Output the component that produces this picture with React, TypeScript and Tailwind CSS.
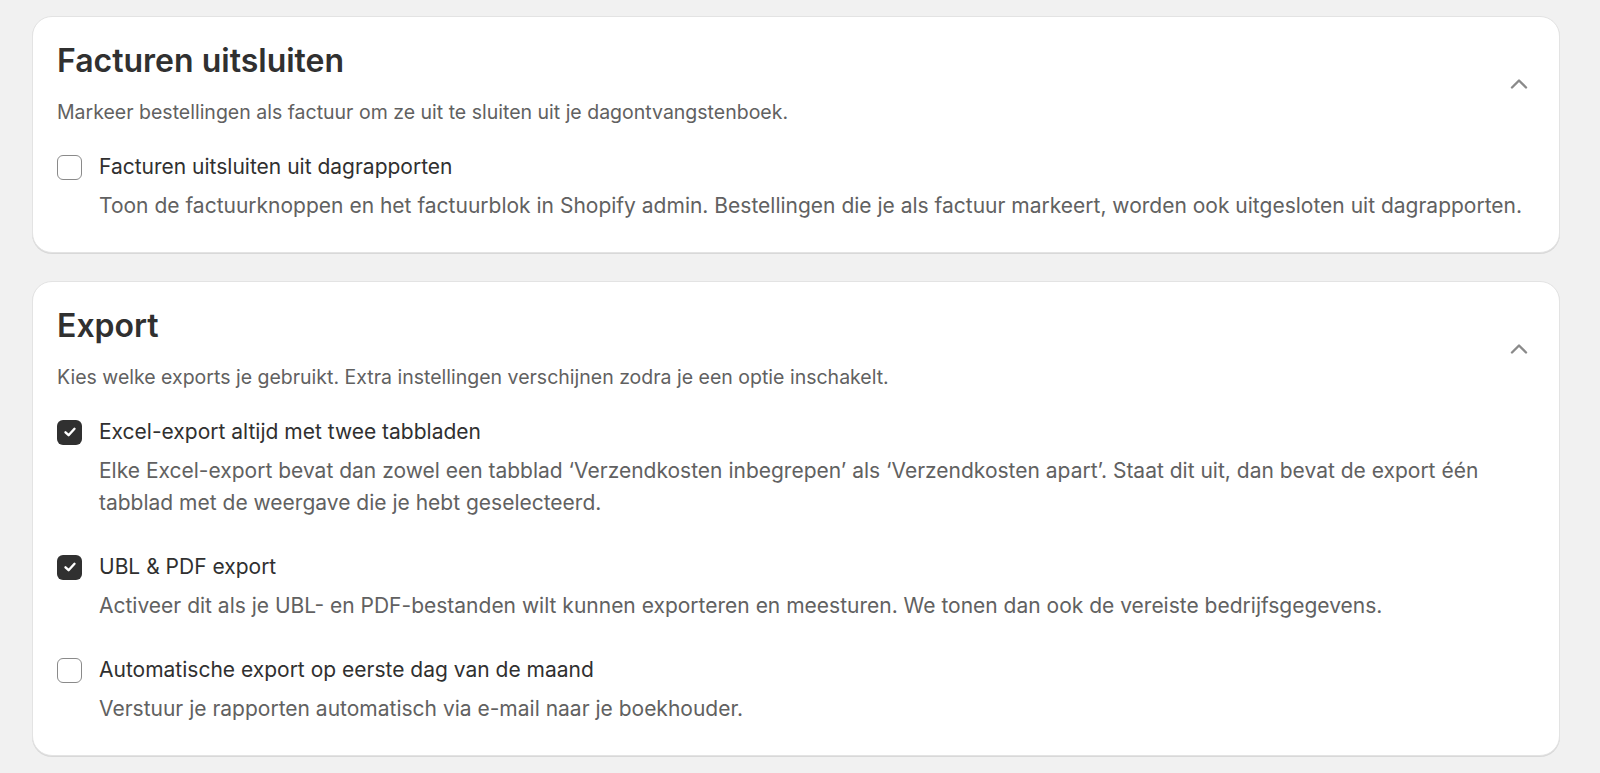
import React from "react";

function Check({ checked }: { checked: boolean }) {
  if (checked) {
    return (
      <div className="w-[25px] h-[25px] shrink-0 rounded-[6px] bg-[#303030] flex items-center justify-center">
        <svg width="16" height="16" viewBox="0 0 16 16" fill="none">
          <path d="M3.5 8.3 L6.6 11.2 L12.5 4.8" stroke="white" strokeWidth="2.4" strokeLinecap="round" strokeLinejoin="round" />
        </svg>
      </div>
    );
  }
  return <div className="w-[25px] h-[25px] shrink-0 rounded-[6px] border-[1.5px] border-[#8a8a8a] bg-white" />;
}

function Chevron() {
  return (
    <svg width="24" height="24" viewBox="0 0 24 24" fill="none" className="shrink-0">
      <path d="M5 15.5 L12 8.5 L19 15.5" stroke="#8a8a8a" strokeWidth="2.4" strokeLinecap="round" strokeLinejoin="round" />
    </svg>
  );
}

function Item({ checked, label, desc, first }: { checked: boolean; label: string; desc: string; first?: boolean }) {
  return (
    <div className={first ? "mt-[27px]" : "mt-[34px]"}>
      <div className="flex items-center gap-[17px]">
        <Check checked={checked} />
        <div className="text-[21px] leading-[28px] text-[#303030]">{label}</div>
      </div>
      <div className="mt-[9px] pl-[42px] text-[21px] leading-[32px] text-[#616161]">{desc}</div>
    </div>
  );
}

function Card({ title, desc, children }: { title: string; desc: string; children: React.ReactNode }) {
  return (
    <div className="bg-white rounded-[20px] border border-[#e3e3e3] shadow-[0_1px_0_0_rgba(0,0,0,0.1)] pl-[24px] pr-[28px] pt-[24px] pb-[30px]">
      <div className="flex items-center justify-between">
        <div>
          <div className="text-[32px] leading-[40px] font-semibold text-[#303030]">{title}</div>
          <div className="mt-[17px] text-[19.5px] leading-[28px] text-[#616161]">{desc}</div>
        </div>
        <Chevron />
      </div>
      {children}
    </div>
  );
}

export default function App() {
  return (
    <div className="min-h-[773px] bg-[#f1f1f1] pl-[32px] pr-[40px] pt-[16px] pb-[20px] flex flex-col gap-[28px]" style={{ fontFamily: "Inter, 'Noto Sans', sans-serif" }}>
      <Card title="Facturen uitsluiten" desc="Markeer bestellingen als factuur om ze uit te sluiten uit je dagontvangstenboek.">
        <Item
          first
          checked={false}
          label="Facturen uitsluiten uit dagrapporten"
          desc="Toon de factuurknoppen en het factuurblok in Shopify admin. Bestellingen die je als factuur markeert, worden ook uitgesloten uit dagrapporten."
        />
      </Card>
      <Card title="Export" desc="Kies welke exports je gebruikt. Extra instellingen verschijnen zodra je een optie inschakelt.">
        <Item
          first
          checked={true}
          label="Excel-export altijd met twee tabbladen"
          desc="Elke Excel-export bevat dan zowel een tabblad ‘Verzendkosten inbegrepen’ als ‘Verzendkosten apart’. Staat dit uit, dan bevat de export één tabblad met de weergave die je hebt geselecteerd."
        />
        <Item
          checked={true}
          label="UBL & PDF export"
          desc="Activeer dit als je UBL- en PDF-bestanden wilt kunnen exporteren en meesturen. We tonen dan ook de vereiste bedrijfsgegevens."
        />
        <Item
          checked={false}
          label="Automatische export op eerste dag van de maand"
          desc="Verstuur je rapporten automatisch via e-mail naar je boekhouder."
        />
      </Card>
    </div>
  );
}
